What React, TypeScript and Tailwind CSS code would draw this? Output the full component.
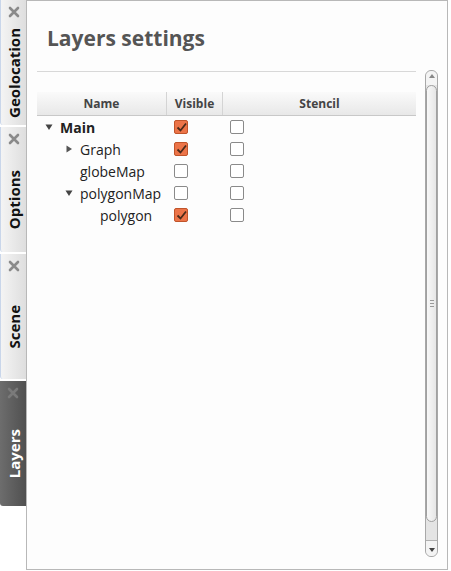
import React from 'react';

const font = { fontFamily: '"Open Sans", "DejaVu Sans", sans-serif' };

function CloseIcon({ dark }: { dark?: boolean }) {
    return (
        <svg width="12" height="12" viewBox="0 0 12 12">
            <path d="M2 2 L10 10 M10 2 L2 10" stroke={dark ? '#7a7a7a' : '#8a8a8a'} strokeWidth="2.6" strokeLinecap="round" />
        </svg>
    );
}

function Tab({ label, active }: { label: string; active?: boolean }) {
    return (
        <div
            className={
                active
                    ? 'flex h-[125px] w-[26px] flex-col items-center rounded-bl-[3px] bg-gradient-to-r from-[#6d6d6d] to-[#505050] pt-[6px]'
                    : 'flex h-[125px] w-[26px] flex-col items-center rounded-bl-[3px] border-l border-[#c9d6ea] bg-gradient-to-r from-[#f4f4f4] to-[#dedede] pt-[6px]'
            }
        >
            <CloseIcon dark={active} />
            <div className="flex flex-1 items-center justify-center pl-[2px] pt-[2px]">
                <span
                    className={active ? 'rotate-180 text-[15px] font-bold text-white [writing-mode:vertical-rl]' : 'rotate-180 text-[15px] font-bold text-[#111] [writing-mode:vertical-rl]'}
                >
                    {label}
                </span>
            </div>
        </div>
    );
}

function Check({ on }: { on?: boolean }) {
    if (on) {
        return (
            <div className="flex h-[14px] w-[14px] items-center justify-center rounded-[2px] border border-[#c0542a] bg-[#ec7448]">
                <svg width="11" height="11" viewBox="0 0 11 11">
                    <path d="M1.5 5.5 L4.5 8.5 L10 1.5" stroke="#4a2a1a" strokeWidth="1.8" fill="none" />
                </svg>
            </div>
        );
    }
    return <div className="h-[14px] w-[14px] rounded-[2px] border border-[#8a8a8a] bg-white" />;
}

function Arrow({ open }: { open?: boolean }) {
    return (
        <svg width="8" height="8" viewBox="0 0 8 8">
            {open ? <path d="M0.5 1.5 L7.5 1.5 L4 7 Z" fill="#444" /> : <path d="M1.5 0.5 L7 4 L1.5 7.5 Z" fill="#555" />}
        </svg>
    );
}

const rows = [
    { name: 'Main', indent: 8, arrow: 'open', bold: true, visible: true },
    { name: 'Graph', indent: 28, arrow: 'closed', visible: true },
    { name: 'globeMap', indent: 28, arrow: '', visible: false },
    { name: 'polygonMap', indent: 28, arrow: 'open', visible: false },
    { name: 'polygon', indent: 48, arrow: '', visible: true },
];

export default function App() {
    return (
        <div className="flex h-[571px] w-[451px] bg-white" style={font}>
            <div className="flex w-[26px] flex-col gap-[2px]">
                <Tab label="Geolocation" />
                <Tab label="Options" />
                <Tab label="Scene" />
                <Tab label="Layers" active />
            </div>
            <div className="flex h-[570px] w-[422px] flex-col border border-[#b8b8b8] bg-[#fdfdfd]">
                <div className="flex h-[70px] items-center pl-[20px] pt-[6px] text-[21px] font-bold text-[#555]">Layers settings</div>
                <div className="flex flex-1">
                    <div className="flex flex-1 flex-col pl-[10px] pr-[9px]">
                        <div className="h-px bg-[#d8d8d8]" />
                        <div className="mt-[20px] flex h-[24px] border-b border-[#c8c8c8] bg-gradient-to-b from-[#fafafa] to-[#e8e8e8] text-[12px] font-bold text-[#444]">
                            <div className="flex w-[130px] items-center justify-center border-r border-[#d4d4d4]">Name</div>
                            <div className="flex w-[56px] items-center justify-center border-r border-[#d4d4d4]">Visible</div>
                            <div className="flex flex-1 items-center justify-center">Stencil</div>
                        </div>
                        {rows.map((r) => (
                            <div key={r.name} className="flex h-[22px] items-center text-[14px] text-[#222]">
                                <div className="flex w-[130px] items-center" style={{ paddingLeft: r.indent }}>
                                    <div className="flex w-[15px] items-center">{r.arrow ? <Arrow open={r.arrow === 'open'} /> : null}</div>
                                    <span className={r.bold ? 'font-bold' : ''}>{r.name}</span>
                                </div>
                                <div className="flex w-[56px] pl-[7px]">
                                    <Check on={r.visible} />
                                </div>
                                <div className="pl-[7px]">
                                    <Check />
                                </div>
                            </div>
                        ))}
                    </div>
                    <div className="mr-[9px] mt-[-1px] mb-[12px] flex w-[13px] flex-col rounded-[6px] border border-[#a8a8a8] bg-[#e4e4e4]">
                        <div className="flex h-[14px] items-start justify-center rounded-t-[6px] bg-[#f4f4f4] pt-[3px]">
                            <svg width="6" height="4" viewBox="0 0 6 4"><path d="M0 4 L3 0 L6 4 Z" fill="#888" /></svg>
                        </div>
                        <div className="flex flex-1 items-center justify-center rounded-[6px] border border-[#a0a0a0] bg-gradient-to-r from-[#f8f8f8] to-[#e6e6e6]">
                            <div className="flex flex-col gap-[2px]">
                                <div className="h-px w-[4px] bg-[#999]" />
                                <div className="h-px w-[4px] bg-[#999]" />
                                <div className="h-px w-[4px] bg-[#999]" />
                            </div>
                        </div>
                        <div className="h-[18px]" />
                        <div className="flex h-[16px] items-end justify-center rounded-b-[6px] border-t border-[#b0b0b0] bg-[#f4f4f4] pb-[4px]">
                            <svg width="6" height="4" viewBox="0 0 6 4"><path d="M0 0 L6 0 L3 4 Z" fill="#444" /></svg>
                        </div>
                    </div>
                </div>
            </div>
        </div>
    );
}
